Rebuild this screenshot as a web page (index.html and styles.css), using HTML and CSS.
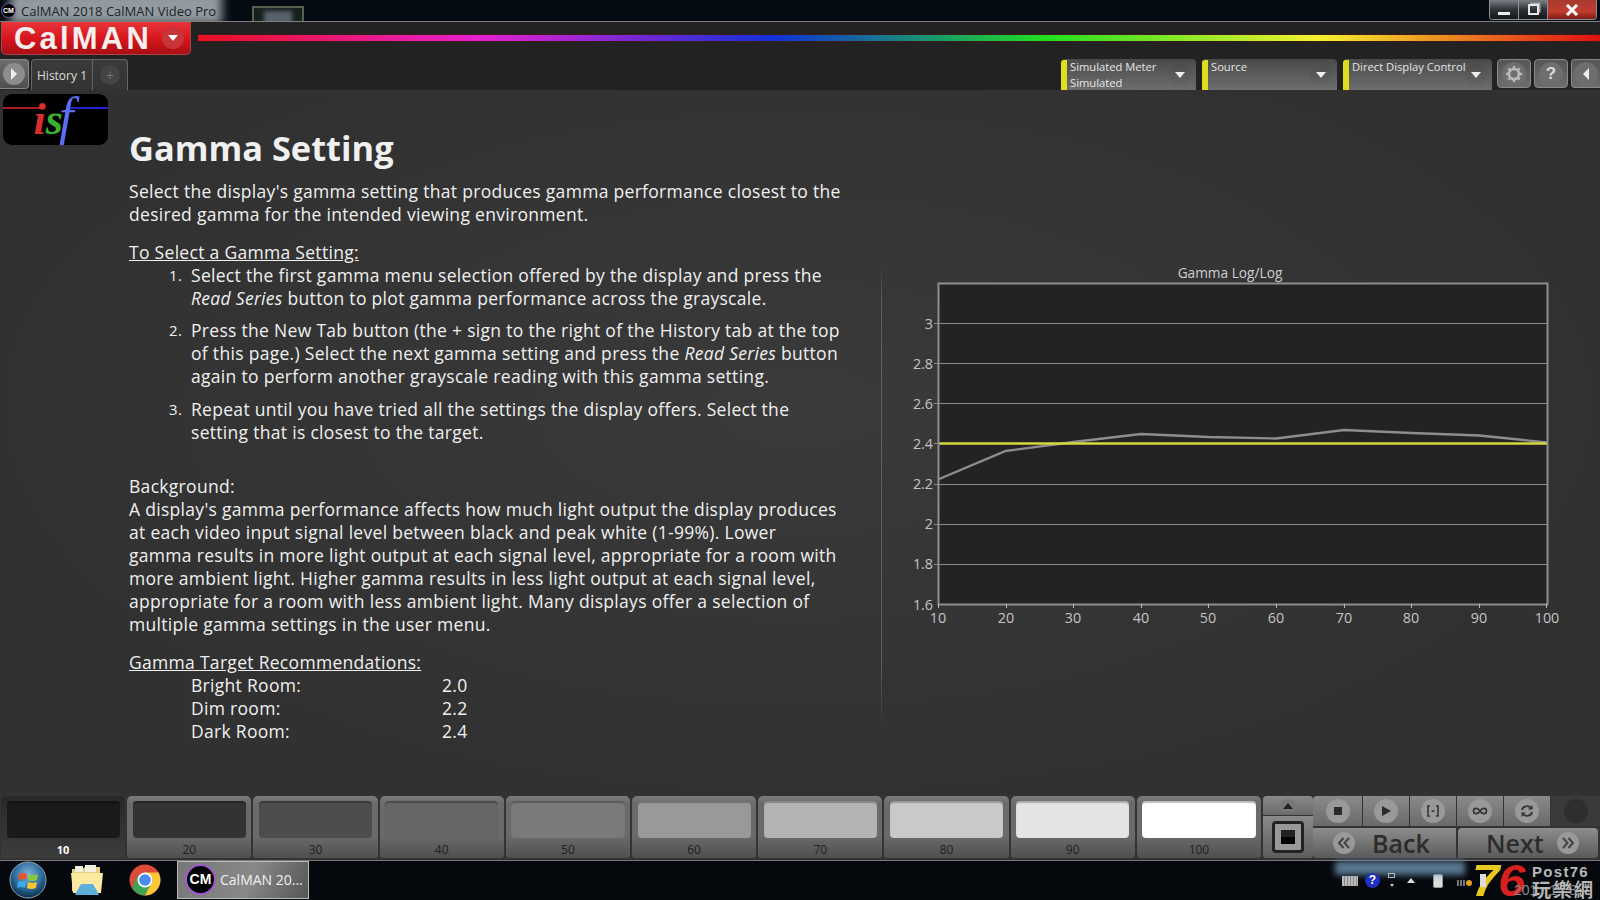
FILE: index.html
```html
<!DOCTYPE html>
<html lang="en">
<head>
<meta charset="utf-8">
<title>CalMAN 2018 CalMAN Video Pro</title>
<link rel="stylesheet" href="styles.css">
</head>
<body>
<div class="app">
  <header class="titlebar">
    <div class="title-glow"></div>
    <div class="title-left">
      <span class="cm-mini">CM</span>
      <span class="title-text">CalMAN 2018 CalMAN Video Pro</span>
    </div>
    <div class="thumb"><div class="thumb-inner"></div></div>
    <div class="winbtns">
      <div class="winbtn"><span class="min-glyph"></span></div>
      <div class="winbtn"><span class="max-glyph"></span></div>
      <div class="winbtn close"><svg width="14" height="12" viewBox="0 0 14 12"><path d="M2 1L12 11M12 1L2 11" stroke="#fff" stroke-width="3" fill="none"/></svg></div>
    </div>
  </header>

  <div class="brandbar">
    <div class="brand">
      <span class="brand-name">CalMAN</span>
      <span class="brand-caret"><svg width="12" height="8" viewBox="0 0 12 8"><path d="M1 1H11L6 7Z" fill="#fff"/></svg></span>
    </div>
    <div class="rainbow"></div>
  </div>

  <div class="tabbar">
    <div class="tabs">
      <div class="playbtn"><span class="round"><svg width="10" height="14" viewBox="0 0 10 14"><path d="M2 1L8 7L2 13Z" fill="#eee"/></svg></span></div>
      <div class="tab"><span>History 1</span></div>
      <div class="tab tab-add"><span class="round round-dark">+</span></div>
    </div>
    <div class="tools">
      <div class="drop d1"><div class="drop-text">Simulated Meter<br>Simulated</div><span class="round caret"><svg width="12" height="8" viewBox="0 0 12 8"><path d="M1 1H11L6 7Z" fill="#eee"/></svg></span></div>
      <div class="drop d2"><div class="drop-text">Source</div><span class="round caret"><svg width="12" height="8" viewBox="0 0 12 8"><path d="M1 1H11L6 7Z" fill="#eee"/></svg></span></div>
      <div class="drop d3"><div class="drop-text">Direct Display Control</div><span class="round caret"><svg width="12" height="8" viewBox="0 0 12 8"><path d="M1 1H11L6 7Z" fill="#eee"/></svg></span></div>
      <div class="tool"><span class="round"><svg width="18" height="18" viewBox="0 0 18 18"><circle cx="9" cy="9" r="5" fill="none" stroke="#bbb" stroke-width="2.6"/><path d="M9 1V4M9 14V17M1 9H4M14 9H17M3.300 3.300L5.400 5.400M12.600 12.600L14.700 14.700M14.700 3.300L12.600 5.400M5.400 12.600L3.300 14.700" stroke="#bbb" stroke-width="2.400"/></svg></span></div>
      <div class="tool"><span class="round help">?</span></div>
      <div class="tool tool-wide"><span class="round"><svg width="10" height="14" viewBox="0 0 10 14"><path d="M8 1L2 7L8 13Z" fill="#eee"/></svg></span></div>
    </div>
  </div>

  <main class="content">
    <div class="logo-col">
      <div class="isf">
        <span class="isf-line red"></span><span class="isf-line blue"></span>
        <div class="isf-word"><span class="i">i</span><span class="s">s</span><span class="f">f</span></div>
      </div>
    </div>
    <article class="doc">
      <h1>Gamma Setting</h1>
      <p>Select the display's gamma setting that produces gamma performance closest to the<br>desired gamma for the intended viewing environment.</p>
      <p class="u-head"><u>To Select a Gamma Setting:</u></p>
      <ol>
        <li>Select the first gamma menu selection offered by the display and press the<br><em>Read Series</em> button to plot gamma performance across the grayscale.</li>
        <li>Press the New Tab button (the + sign to the right of the History tab at the top<br>of this page.) Select the next gamma setting and press the <em>Read Series</em> button<br>again to perform another grayscale reading with this gamma setting.</li>
        <li>Repeat until you have tried all the settings the display offers. Select the<br>setting that is closest to the target.</li>
      </ol>
      <p class="bg-head">Background:<br>A display's gamma performance affects how much light output the display produces<br>at each video input signal level between black and peak white (1-99%). Lower<br>gamma results in more light output at each signal level, appropriate for a room with<br>more ambient light. Higher gamma results in less light output at each signal level,<br>appropriate for a room with less ambient light. Many displays offer a selection of<br>multiple gamma settings in the user menu.</p>
      <p class="u-head target-head"><u>Gamma Target Recommendations:</u></p>
      <dl class="targets">
        <dt>Bright Room:</dt><dd>2.0</dd>
        <dt>Dim room:</dt><dd>2.2</dd>
        <dt>Dark Room:</dt><dd>2.4</dd>
      </dl>
    </article>
    <aside class="chart-col">
      <svg class="chart" width="692" height="368" viewBox="0 0 692 368">
        <text class="ct" x="348" y="12" text-anchor="middle">Gamma Log/Log</text>
        <rect x="56" y="17" width="609" height="321" fill="#232323"/>
        <g class="grid">
          <path d="M52 57.500H665M52 97.500H665M52 137.500H665M52 177.500H665M52 218.500H665M52 258.500H665M52 298.500H665"/>
        </g>
        <path class="data" d="M56 213.500L123.700 185L191.300 176L259 168L326.700 171L394.300 172.500L462 164L529.700 167L597.300 169.500L665 176.500"/>
        <path class="target" d="M56 177.500H665"/>
        <rect class="frame" x="56.500" y="17.500" width="609" height="321"/>
        <g class="ticks"><path d="M56.500 338V342M124.500 338V342M191.500 338V342M259.500 338V342M326.500 338V342M394.500 338V342M462.500 338V342M529.500 338V342M597.500 338V342M664.500 338V342"/></g>
        <g class="yl" text-anchor="end">
          <text x="51" y="63">3</text><text x="51" y="103">2.8</text><text x="51" y="143">2.6</text><text x="51" y="183">2.4</text><text x="51" y="223">2.2</text><text x="51" y="263">2</text><text x="51" y="303">1.8</text><text x="51" y="344">1.6</text>
        </g>
        <g class="yl" text-anchor="middle">
          <text x="56" y="357">10</text><text x="124" y="357">20</text><text x="191" y="357">30</text><text x="259" y="357">40</text><text x="326" y="357">50</text><text x="394" y="357">60</text><text x="462" y="357">70</text><text x="529" y="357">80</text><text x="597" y="357">90</text><text x="665" y="357">100</text>
        </g>
      </svg>
    </aside>
  </main>

  <section class="controls">
    <div class="swatches">
      <div class="sw sel"><div class="chip c10"></div><b>10</b></div>
      <div class="sw"><div class="chip c20"></div><span>20</span></div>
      <div class="sw"><div class="chip c30"></div><span>30</span></div>
      <div class="sw"><div class="chip c40"></div><span>40</span></div>
      <div class="sw"><div class="chip c50"></div><span>50</span></div>
      <div class="sw"><div class="chip c60"></div><span>60</span></div>
      <div class="sw"><div class="chip c70"></div><span>70</span></div>
      <div class="sw"><div class="chip c80"></div><span>80</span></div>
      <div class="sw"><div class="chip c90"></div><span>90</span></div>
      <div class="sw"><div class="chip c100"></div><span>100</span></div>
    </div>
    <div class="stopcol">
      <div class="upbtn"><span class="round round-sm"><svg width="12" height="8" viewBox="0 0 12 8"><path d="M1 7H11L6 1Z" fill="#222"/></svg></span></div>
      <div class="stopbtn"><span class="stopbox"><i class="stopin"></i></span></div>
    </div>
    <div class="transport">
      <div class="trow">
        <div class="tbtn"><span class="round"><svg width="12" height="12" viewBox="0 0 12 12"><rect x="2" y="2" width="8" height="8" fill="#2a2a2a"/></svg></span></div>
        <div class="tbtn"><span class="round"><svg width="12" height="12" viewBox="0 0 12 12"><path d="M2 1L11 6L2 11Z" fill="#2a2a2a"/></svg></span></div>
        <div class="tbtn"><span class="round"><svg width="14" height="12" viewBox="0 0 14 12"><path d="M4 1H2V11H4M10 1H12V11H10M5.500 6H8.500" fill="none" stroke="#333" stroke-width="1.500"/></svg></span></div>
        <div class="tbtn"><span class="round"><svg width="16" height="10" viewBox="0 0 16 10"><path d="M8 5C6 1.500 1.500 1.500 1.500 5S6 8.500 8 5S14.500 1.500 14.500 5S10 8.500 8 5Z" fill="none" stroke="#333" stroke-width="1.600"/></svg></span></div>
        <div class="tbtn"><span class="round"><svg width="14" height="14" viewBox="0 0 14 14"><path d="M2 6A5 4.500 0 0 1 11 4M12 8A5 4.500 0 0 1 3 10" fill="none" stroke="#333" stroke-width="1.800"/><path d="M12.500 1V5.500H8M1.500 13V8.500H6" fill="#333"/></svg></span></div>
        <div class="tbtn dark"><span class="round round-off"></span></div>
      </div>
      <div class="nav">
        <div class="navbtn back"><span class="round chev"><svg width="14" height="12" viewBox="0 0 14 12"><path d="M6.500 1L2 6L6.500 11M12 1L7.500 6L12 11" fill="none" stroke="#444" stroke-width="2"/></svg></span><span class="navlabel">Back</span></div>
        <div class="navbtn next"><span class="navlabel">Next</span><span class="round chev"><svg width="14" height="12" viewBox="0 0 14 12"><path d="M2 1L6.500 6L2 11M7.500 1L12 6L7.500 11" fill="none" stroke="#444" stroke-width="2"/></svg></span></div>
      </div>
    </div>
  </section>

  <footer class="taskbar">
    <div class="task-left">
      <div class="orb"><svg width="38" height="38" viewBox="0 0 38 38"><defs><radialGradient id="o" cx="50%" cy="35%" r="65%"><stop offset="0" stop-color="#7fb4dc"/><stop offset=".6" stop-color="#2b6b9c"/><stop offset="1" stop-color="#0f2c48"/></radialGradient></defs><circle cx="19" cy="19" r="18" fill="url(#o)" stroke="#8fa8b8"/><path d="M10 13Q14 11 18 13L17 19Q13 17 9 19Z" fill="#e8552f"/><path d="M20 13Q24 15 29 13L28 19Q23 21 19 19Z" fill="#8cc63f"/><path d="M9 21Q13 19 17 21L16 27Q12 25 8 27Z" fill="#3fa9e8"/><path d="M19 21Q23 23 28 21L27 27Q22 29 18 27Z" fill="#f7c52d"/></svg></div>
      <div class="folder"><svg width="34" height="34" viewBox="0 0 34 34"><path d="M2 6H12L15 4H30V28H2Z" fill="#e9d27d"/><path d="M5 3H13V9H5ZM15 2H26V9H15Z" fill="#f3efe0"/><path d="M1 10H33L31 30H3Z" fill="#fbe9a0"/><path d="M7 28L11 21H23L27 28L29 32H5Z" fill="#5ab0d8"/></svg></div>
      <div class="chrome"><svg width="32" height="32" viewBox="0 0 32 32"><circle cx="16" cy="16" r="15.500" fill="#dd4b39"/><path d="M16 16L3 23.500A15.500 15.500 0 0 0 16 31.500L24 16Z" fill="#3aa757"/><path d="M16 31.500A15.500 15.500 0 0 0 29.500 8.500H16L24 16Z" fill="#fcc934"/><path d="M3 23.500L9 11L16 16Z" fill="#3aa757"/><circle cx="16" cy="16" r="7.500" fill="#fff"/><circle cx="16" cy="16" r="5.800" fill="#4a8df0"/></svg></div>
      <div class="taskapp"><span class="cm-big">CM</span><span class="taskapp-text">CalMAN 20...</span></div>
    </div>
    <div class="tray">
      <div class="tray-glow"></div>
      <span class="kbd"></span>
      <span class="q">?</span>
      <span class="tsmall"><i class="ts1"></i><i class="ts2"></i></span>
      <span class="up"></span>
      <span class="batt"></span>
      <span class="signal"><i></i><i></i><i></i><b></b></span>
      <span class="vol"></span>
      <div class="mark"><span class="m7">7</span><span class="m6">6</span></div>
      <div class="clock">201 1 8</div>
      <div class="mark2"><span class="post">Post76</span><span class="cn">玩樂網</span></div>
    </div>
  </footer>
</div>
</body>
</html>
```
FILE: styles.css
```css
* { box-sizing: border-box; }
html, body { margin: 0; padding: 0; background: #222; }
body { width: 1600px; height: 900px; overflow: hidden; font-family: "Open Sans", "Noto Sans", sans-serif; color: #e6e6e6; }
.app { display: flex; flex-direction: column; width: 1600px; height: 900px; }

.titlebar { position: relative; height: 22px; flex: none; display: flex; align-items: flex-start; background: #050b13; border-bottom: 1px solid #7d8083; overflow: hidden; }
.title-glow { position: absolute; left: 10px; top: -8px; width: 212px; height: 32px; background: #b7c0c4; filter: blur(5px); opacity: .8; }
.title-left { position: relative; width: 252px; height: 21px; display: flex; align-items: center; gap: 5px; padding-left: 1px; }
.cm-mini { width: 15px; height: 15px; border-radius: 50%; background: #000; border: 1px solid #7a5ab0; color: #fff; font: 700 7px/13px "Liberation Sans", sans-serif; text-align: center; }
.title-text { font-size: 13px; color: #1c2227; }
.thumb { position: relative; margin-top: 6px; width: 52px; height: 20px; border: 2px solid #54634f; background: #16211f; }
.thumb-inner { margin: 3px 10px; height: 14px; background: #59626a; filter: blur(2px); }
.winbtns { position: absolute; right: 3px; top: 0; height: 20px; display: flex; border: 1px solid #8b9094; border-top: 0; border-radius: 0 0 4px 4px; overflow: hidden; }
.winbtn { width: 29px; height: 19px; display: flex; align-items: center; justify-content: center; background: linear-gradient(#7a7f84, #2d3238 50%, #15181c); border-right: 1px solid #8b9094; }
.winbtn.close { width: 48px; border: 0; background: linear-gradient(#a73a30, #c13c2e 60%, #7c1c14); }
.min-glyph { width: 12px; height: 3px; margin-top: 8px; background: #eee; }
.max-glyph { width: 11px; height: 11px; border: 2px solid #e5e5e5; box-shadow: 2px -2px 0 -0.5px #aaa; }

.brandbar { height: 33px; flex: none; display: flex; background: #222; }
.brand { width: 190px; height: 33px; margin-left: 1px; padding: 0 6px 0 12px; display: flex; align-items: center; justify-content: space-between; background: linear-gradient(#e8353a, #d5141c 55%, #a80f14); border: 1px solid #a44; border-top: 0; border-radius: 0 0 5px 5px; }
.brand-name { font: 700 31px/31px "Liberation Sans", sans-serif; letter-spacing: 3.200px; color: #f4eeee; }
.brand-caret { width: 22px; height: 22px; border-radius: 50%; background: #c9343a; display: flex; align-items: center; justify-content: center; }
.rainbow { flex: 1; height: 6px; margin: 13px 0 0 7px; background: linear-gradient(90deg, #e81020 0%, #e820d0 20%, #1030d8 41%, #20e020 60.500%, #f5f030 80%, #e01010 100%); box-shadow: 0 0 2px #7a1010; }

.tabbar { height: 35px; flex: none; display: flex; justify-content: space-between; background: #222; }
.tabs, .tools { display: flex; align-items: flex-end; }
.round { border-radius: 50%; display: flex; align-items: center; justify-content: center; flex: none; background: #777; }
.playbtn { width: 29px; height: 30px; margin-bottom: 1px; border: 1px solid #888; border-left: 0; border-radius: 0 4px 4px 0; background: linear-gradient(#6d6d6d, #4e4e4e); display: flex; align-items: center; justify-content: center; }
.playbtn .round { width: 22px; height: 22px; background: #8d8d8d; }
.tab { height: 31px; width: 62px; margin-left: 1px; border: 1px solid #666; border-bottom: 0; border-radius: 4px 0 0 0; background: linear-gradient(#3b3b3b, #333); display: flex; align-items: center; justify-content: center; font-size: 12px; color: #ddd; }
.tab:nth-child(2) { margin-left: 2px; }
.tab-add { width: 35px; margin-left: 0; border-left: 0; border-radius: 0 4px 0 0; }
.round-dark { width: 20px; height: 20px; background: #444; color: #777; font-size: 14px; }
.tools { gap: 6px; }
.drop { position: relative; height: 31px; display: flex; justify-content: space-between; padding: 0 5px 0 9px; background: linear-gradient(#4a4a4a, #6d6d6d); border-radius: 4px 4px 0 0; }
.drop::before { content: ""; position: absolute; left: 0; top: 1px; bottom: 0; width: 6px; background: #dede1e; border-radius: 3px 0 0 0; }
.d1, .d2 { width: 135px; }
.d3 { width: 149px; }
.drop-text { font-size: 11.200px; line-height: 16px; color: #e6e6e6; white-space: nowrap; }
.drop .caret { width: 22px; height: 22px; margin-top: 5px; background: linear-gradient(#4c4c4c, #656565); }
.tool { height: 29px; width: 34px; margin-bottom: 2px; margin-left: -3px; border: 1px solid #888; border-radius: 4px; background: linear-gradient(#555, #6d6d6d); display: flex; align-items: center; justify-content: center; }
.tool:nth-child(4) { margin-left: -1px; }
.tool .round { width: 24px; height: 24px; background: #6e6e6e; }
.tool-wide { width: 29px; justify-content: flex-start; padding-left: 2px; border-radius: 4px 0 0 4px; border-right: 0; }
.help { font: 700 17px/24px "Liberation Sans", sans-serif; color: #ddd; }

.content { flex: 1; min-height: 0; display: flex; background: radial-gradient(ellipse at 50% 45%, #3a3a3a, #313131 70%); }
.logo-col { width: 129px; flex: none; padding: 4px 0 0 3px; }
.isf { position: relative; width: 105px; height: 51px; background: #000; border-radius: 9px; }
.isf-line { position: absolute; top: 13px; height: 2px; }
.isf-line.red { left: 0; width: 38px; background: #a81c1c; }
.isf-line.blue { left: 64px; right: 0; background: #2222cc; }
.isf-word { position: relative; height: 51px; display: flex; justify-content: center; align-items: baseline; font: italic 700 44px/46px "Liberation Serif", serif; padding-right: 4px; }
.isf-word .i { color: #d92e2e; }
.isf-word .s { color: #39b035; }
.isf-word .f { color: #5a6ef5; margin-left: -4px; font-size: 52px; font-weight: 400; }

.doc { width: 750px; flex: none; font-size: 17.500px; letter-spacing: .3px; line-height: 23px; color: #f0f0f0; }
.doc h1 { margin: 32.500px 0 0; font-size: 34.400px; letter-spacing: 0; line-height: 50px; font-weight: 700; color: #f0f0f0; }
.doc p { margin: 0; }
.doc > p:first-of-type { margin-top: 7px; }
.u-head { margin-top: 15px !important; }
.doc ol { margin: 0; padding: 0 0 0 62px; list-style: none; counter-reset: n; }
.doc li { position: relative; counter-increment: n; margin-bottom: 9.500px; }
.doc li::before { content: counter(n) "."; position: absolute; left: -22px; font-size: 15px; }
.bg-head { margin-top: 31px !important; }
.target-head { margin-top: 15px !important; }
.targets { margin: 0; padding-left: 62px; display: grid; grid-template-columns: 251px auto; justify-content: start; }
.targets dt, .targets dd { margin: 0; }

.chart-col { flex: none; margin-top: 175px; height: 465px; width: 719px; border-left: 1px solid; border-image: linear-gradient(transparent, #5e5e5e 8%, #5e5e5e 85%, transparent) 1; margin-left: 2px; }
.chart { display: block; margin-top: 1px; overflow: visible; }
.ct { font-size: 13.700px; fill: #cfcfcf; }
.grid path { stroke: #8f8f8f; stroke-width: 1; fill: none; }
.data { stroke: #8d8d8d; stroke-width: 2.400; fill: none; }
.target { stroke: #d8d840; stroke-width: 2.500; fill: none; }
.frame { stroke: #8e8e8e; stroke-width: 2; fill: none; }
.ticks path { stroke: #bbb; stroke-width: 1; fill: none; }
.yl text { font-size: 14.300px; fill: #c4c4c4; }

.controls { height: 65px; flex: none; display: flex; background: #333; padding: 1px 0 2px 1px; }
.swatches { display: flex; gap: 2px; width: 1260px; margin-right: 2px; }
.sw { flex: 1; border-radius: 5px 5px 3px 3px; background: linear-gradient(#7c7c7c, #6a6a6a 12%, #6a6a6a 65%, #4f4f4f); padding: 5px 5.500px 0; text-align: center; font-size: 12px; line-height: 16px; color: #1e1e1e; }
.sw.sel { background: linear-gradient(#282828, #3c3c3c); color: #fff; font-size: 11px; }
.sw b { font-weight: 700; }
.chip { height: 37px; margin-bottom: 4px; border-radius: 4px; box-shadow: inset 0 2px 1px rgba(0,0,0,.25); }
.c10 { background: #1a1a1a; }
.c20 { background: #333; }
.c30 { background: #4d4d4d; }
.c40 { background: #666; }
.c50 { background: #7a7a7a; }
.c60 { background: #999; }
.c70 { background: #b3b3b3; }
.c80 { background: #c9c9c9; }
.c90 { background: #e4e4e4; }
.c100 { background: #fff; }
.stopcol { width: 50px; display: flex; flex-direction: column; gap: 1px; }
.upbtn { height: 19px; background: linear-gradient(#8a8a8a, #6a6a6a); border-radius: 4px 4px 0 0; display: flex; align-items: center; justify-content: center; }
.round-sm { width: 16px; height: 14px; background: #777; }
.stopbtn { flex: 1; background: linear-gradient(#8a8a8a, #5d5d5d); border-radius: 0 0 3px 3px; display: flex; align-items: center; justify-content: center; }
.stopbox { width: 32px; height: 32px; border: 3px solid #222; border-radius: 4px; background: #999; display: flex; align-items: center; justify-content: center; }
.stopin { display: block; width: 14px; height: 14px; background: linear-gradient(#222 50%, #000 50%); }
.transport { flex: 1; display: flex; flex-direction: column; gap: 2px; }
.trow { height: 31px; display: flex; gap: 1px; }
.tbtn { width: 46px; background: linear-gradient(#8a8a8a, #6a6a6a); display: flex; align-items: center; justify-content: center; }
.tbtn:first-child { width: 49px; border-radius: 4px 0 0 0; }
.tbtn.dark { flex: 1; background: #3a3a3a; }
.tbtn .round { width: 24px; height: 24px; background: #999; }
.tbtn .round-off { background: #2e2e2e; }
.nav { flex: 1; display: flex; gap: 2px; padding-right: 2px; }
.navbtn { display: flex; align-items: center; background: linear-gradient(#8d8d8d, #5a5a5a); font: 600 25px/30px "Open Sans", sans-serif; color: #2c2c2c; }
.back { width: 143px; padding-left: 20px; gap: 17px; border-radius: 0 0 0 4px; }
.next { width: 140px; padding: 0 19px 0 28px; justify-content: space-between; border-radius: 4px 4px 4px 0; }
.chev { width: 22px; height: 22px; background: #999; }

.taskbar { height: 40px; flex: none; display: flex; justify-content: space-between; background: #05080c; border-top: 1px solid #777; }
.task-left { display: flex; align-items: center; height: 37px; }
.orb { width: 38px; margin-left: 9px; }
.orb svg, .folder svg, .chrome svg { display: block; }
.folder { margin-left: 23px; }
.chrome { margin-left: 25px; }
.taskapp { margin-left: 16px; width: 132px; height: 38px; border: 1px solid #bbb; background: linear-gradient(115deg, #777, #888 55%, #555); display: flex; align-items: center; gap: 4px; padding-left: 7px; }
.cm-big { width: 31px; height: 31px; border-radius: 50%; background: #000; border: 2px solid #a05ad0; color: #fff; font: 700 14px/27px "Liberation Sans", sans-serif; text-align: center; }
.taskapp-text { font-size: 14px; color: #f0f0f0; }
.tray { position: relative; width: 270px; height: 39px; display: flex; align-items: center; padding: 0 0 0 12px; }
.tray-glow { position: absolute; left: 5px; top: 0; width: 130px; height: 14px; background: #6e93b2; filter: blur(3px); opacity: .8; }
.kbd { position: relative; width: 16px; height: 10px; background: repeating-linear-gradient(90deg, #bbb 0 2px, #888 2px 3px); }
.q { position: relative; width: 15px; height: 15px; margin-left: 7px; border-radius: 50%; background: #2030c0; color: #fff; font: 700 12px/15px "Liberation Sans", sans-serif; text-align: center; }
.tsmall { position: relative; width: 7px; height: 16px; margin-left: 8px; }
.ts1 { position: absolute; left: 0; top: 0; width: 7px; height: 5px; border: 1px solid #bbb; }
.ts2 { position: absolute; left: 2px; top: 11px; width: 0; height: 0; border-left: 2px solid transparent; border-right: 2px solid transparent; border-top: 3px solid #ccc; }
.up { width: 0; height: 0; margin-left: 12px; border-left: 4px solid transparent; border-right: 4px solid transparent; border-bottom: 5px solid #ddd; }
.batt { width: 10px; height: 14px; margin-left: 18px; background: #ddd; border: 1px solid #999; border-radius: 2px; }
.signal { display: flex; align-items: flex-end; gap: 1px; margin-left: 14px; height: 10px; }
.signal i { display: block; width: 2px; background: #777; height: 6px; }
.signal b { display: block; width: 6px; height: 6px; border-radius: 50%; background: #e8a020; }
.vol { position: relative; z-index: 1; width: 6px; height: 13px; margin-left: 8px; background: #ddd; }
.mark { position: absolute; left: 142px; top: 3px; display: flex; font: italic 700 44px/34px "Liberation Sans", sans-serif; letter-spacing: -1px; transform: scaleX(1.120); transform-origin: left center; }
.m7 { color: #e8c81e; }
.m6 { color: #d91f1f; }
.clock { position: absolute; left: 184px; top: 21px; font: 400 14px/16px "Liberation Sans", sans-serif; word-spacing: 8px; color: #8a8a8a; }
.mark2 { position: absolute; left: 202px; top: 4px; display: flex; flex-direction: column; color: #b8b8b8; }
.post { font: 700 15px/13px "Liberation Sans", sans-serif; letter-spacing: 1.300px; }
.cn { font: 700 19px/21px "Noto Sans CJK TC", sans-serif; letter-spacing: 2px; }
```
